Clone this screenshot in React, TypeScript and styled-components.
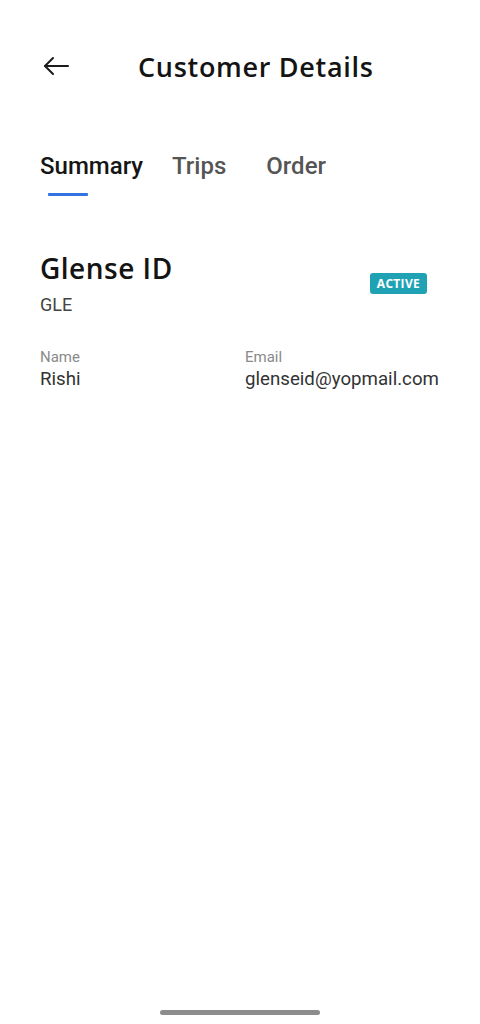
import React from 'react';
import styled, { createGlobalStyle } from 'styled-components';

const GlobalStyle = createGlobalStyle`
    html, body {
        margin: 0;
        padding: 0;
        background: #ffffff;
    }
    body {
        font-family: Roboto, "Liberation Sans", sans-serif;
    }
`;

const Screen = styled.div`
    width: 480px;
    height: 1024px;
    position: relative;
    display: flex;
    flex-direction: column;
    background: #fff;
`;

const Header = styled.header`
    height: 70px;
    margin-top: 32px;
    display: flex;
    align-items: center;
    padding: 0 0 0 40px;
    box-sizing: border-box;
`;

const BackButton = styled.button`
    width: 32px;
    height: 32px;
    border: none;
    background: none;
    padding: 0;
    display: flex;
    align-items: center;
    justify-content: center;
    margin-top: -3px;
`;

const Title = styled.h1`
    margin: -2px 0 0 66px;
    font-family: "Open Sans", sans-serif;
    font-weight: 600;
    font-size: 27px;
    letter-spacing: 0.7px;
    color: #141414;
`;

const Tabs = styled.nav`
    display: flex;
    padding: 0 0 0 40px;
    margin-top: 50px;
`;

const Tab = styled.div<{ $active?: boolean; $gap: number }>`
    position: relative;
    margin-right: ${({ $gap }) => $gap}px;
    font-size: 24px;
    font-weight: 500;
    color: ${({ $active }) => ($active ? '#151515' : '#555')};
    padding-bottom: 16px;

    &::after {
        content: '';
        display: ${({ $active }) => ($active ? 'block' : 'none')};
        position: absolute;
        left: 8px;
        bottom: 0;
        width: 40px;
        height: 3px;
        background: #3173e0;
        border-radius: 1px;
    }
`;

const Card = styled.section`
    padding: 0 53px 0 40px;
    margin-top: 54px;
`;

const TopRow = styled.div`
    display: flex;
    justify-content: space-between;
    align-items: flex-start;
`;

const IdName = styled.h2`
    margin: 0;
    font-family: "Open Sans", sans-serif;
    font-weight: 600;
    font-size: 28px;
    letter-spacing: 0.5px;
    line-height: 36px;
    color: #141414;
`;

const Code = styled.div`
    margin-top: 8px;
    font-size: 18px;
    color: #444;
`;

const Badge = styled.span`
    margin-top: 23px;
    background: #1ea2b4;
    color: #fff;
    font-family: "Open Sans", sans-serif;
    font-weight: 700;
    font-size: 12px;
    letter-spacing: 0.3px;
    padding: 3px 7px;
    border-radius: 3px;
    line-height: 15px;
`;

const Fields = styled.div`
    display: grid;
    grid-template-columns: 205px 1fr;
    margin-top: 33px;
`;

const Label = styled.div`
    font-size: 15px;
    color: #8a8a8a;
    line-height: 18px;
`;

const Value = styled.div`
    margin-top: 1px;
    font-size: 18.7px;
    color: #333;
    line-height: 24px;
    white-space: nowrap;
`;

const HomeBar = styled.div`
    position: absolute;
    bottom: 9px;
    left: 160px;
    width: 160px;
    height: 5px;
    border-radius: 3px;
    background: #8c8c8c;
`;

const BackArrow = () => (
    <svg width="28" height="20" viewBox="0 0 28 20" fill="none" stroke="#1b1b1b" strokeWidth="2" strokeLinecap="round" strokeLinejoin="round">
        <path d="M26 10H3" />
        <path d="M11 2L3 10L11 18" />
    </svg>
);

const App: React.FC = () => {
    const fields = [
        { label: 'Name', value: 'Rishi' },
        { label: 'Email', value: 'glenseid@yopmail.com' },
    ];

    return (
        <>
            <GlobalStyle />
            <Screen>
                <Header>
                    <BackButton aria-label="Back">
                        <BackArrow />
                    </BackButton>
                    <Title>Customer Details</Title>
                </Header>
                <Tabs>
                    <Tab $active $gap={29}>Summary</Tab>
                    <Tab $gap={40}>Trips</Tab>
                    <Tab $gap={0}>Order</Tab>
                </Tabs>
                <Card>
                    <TopRow>
                        <div>
                            <IdName>Glense ID</IdName>
                            <Code>GLE</Code>
                        </div>
                        <Badge>ACTIVE</Badge>
                    </TopRow>
                    <Fields>
                        {fields.map((f) => (
                            <div key={f.label}>
                                <Label>{f.label}</Label>
                                <Value>{f.value}</Value>
                            </div>
                        ))}
                    </Fields>
                </Card>
                <HomeBar />
            </Screen>
        </>
    );
};

export default App;
